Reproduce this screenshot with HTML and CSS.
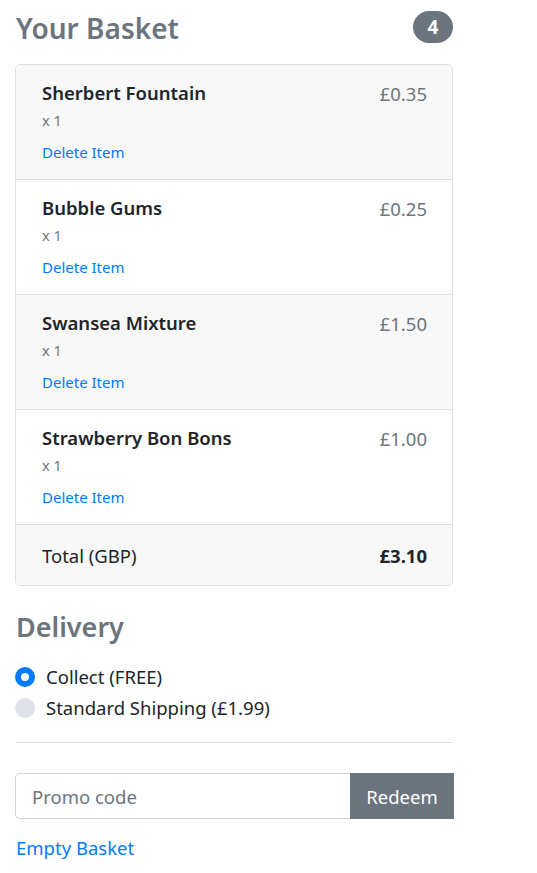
FILE: index.html
```html
<!DOCTYPE html>
<html lang="en">
<head>
<meta charset="utf-8">
<title>Your Basket</title>
<link rel="stylesheet" href="styles.css">
</head>
<body>
<div class="page">
  <div class="head">
    <h4 class="title">Your Basket</h4>
    <span class="badge">4</span>
  </div>
  <ul class="basket">
    <li class="item shade">
      <div class="info">
        <h6 class="name">Sherbert Fountain</h6>
        <small class="qty">x 1</small>
        <a class="del" href="#">Delete Item</a>
      </div>
      <span class="price">£0.35</span>
    </li>
    <li class="item">
      <div class="info">
        <h6 class="name">Bubble Gums</h6>
        <small class="qty">x 1</small>
        <a class="del" href="#">Delete Item</a>
      </div>
      <span class="price">£0.25</span>
    </li>
    <li class="item shade">
      <div class="info">
        <h6 class="name">Swansea Mixture</h6>
        <small class="qty">x 1</small>
        <a class="del" href="#">Delete Item</a>
      </div>
      <span class="price">£1.50</span>
    </li>
    <li class="item">
      <div class="info">
        <h6 class="name">Strawberry Bon Bons</h6>
        <small class="qty">x 1</small>
        <a class="del" href="#">Delete Item</a>
      </div>
      <span class="price">£1.00</span>
    </li>
    <li class="total shade">
      <span>Total (GBP)</span>
      <strong>£3.10</strong>
    </li>
  </ul>
  <h4 class="section">Delivery</h4>
  <div class="radios">
    <label class="radio"><span class="dot on"></span>Collect (FREE)</label>
    <label class="radio"><span class="dot"></span>Standard Shipping (£1.99)</label>
  </div>
  <hr class="rule">
  <form class="promo">
    <input class="promo-input" type="text" placeholder="Promo code">
    <button class="promo-btn" type="button">Redeem</button>
  </form>
  <a class="empty" href="#">Empty Basket</a>
</div>
</body>
</html>
```

FILE: styles.css
```css
* { box-sizing: border-box; }
html, body { margin: 0; padding: 0; background: #fff; }
body {
  font-family: "Noto Sans", "Open Sans", sans-serif;
  color: #212529;
  font-size: 19px;
}
.page {
  padding: 0 0 0 15px;
  width: 454px;
}
.head {
  display: flex;
  justify-content: space-between;
  align-items: center;
  height: 56px;
  padding-right: 1px;
}
.title {
  margin: 0;
  font-size: 28px;
  font-weight: 600;
  color: #6c757d;
  line-height: 1;
  padding-left: 1px;
}
.badge {
  background: #6c757d;
  color: #fff;
  font-weight: 700;
  font-size: 19px;
  border-radius: 17px;
  width: 40px;
  height: 32px;
  display: flex;
  align-items: center;
  justify-content: center;
  margin-top: -2px;
}
.basket {
  list-style: none;
  margin: 8px 0 0 0;
  padding: 0;
  width: 438px;
  border: 1px solid #dfdfdf;
  border-radius: 5px;
  overflow: hidden;
}
.item {
  display: flex;
  justify-content: space-between;
  height: 115px;
  padding: 14px 25px 0 26px;
  border-bottom: 1px solid #dfdfdf;
  background: #fff;
}
.shade { background: #f8f8f8; }
.info { display: flex; flex-direction: column; }
.name {
  margin: 0;
  font-size: 18.5px;
  font-weight: 600;
  line-height: 28px;
  color: #212529;
}
.qty {
  font-size: 14.5px;
  color: #6c757d;
  line-height: 27px;
}
.del {
  font-size: 15px;
  color: #007bff;
  text-decoration: none;
  line-height: 36px;
}
.price {
  color: #6c757d;
  font-size: 18.5px;
  line-height: 30px;
}
.total {
  display: flex;
  justify-content: space-between;
  align-items: center;
  height: 60px;
  padding: 0 25px 0 26px;
  font-size: 18.5px;
}
.total strong { font-weight: 700; }
.section {
  margin: 0;
  padding: 25px 0 0 1px;
  font-size: 27px;
  font-weight: 600;
  color: #6c757d;
  line-height: 32px;
}
.radios { margin-top: 18px; }
.radio {
  display: flex;
  align-items: center;
  height: 31px;
  font-size: 18.5px;
  color: #212529;
}
.dot {
  width: 20px;
  height: 20px;
  border-radius: 50%;
  background: #dee2e6;
  margin-right: 11px;
  flex: none;
}
.dot.on {
  border: 6px solid #007bff;
  background: #fff;
}
.rule {
  margin: 19px 0 0 1px;
  width: 437px;
  border: 0;
  border-top: 1px solid #e3e3e3;
}
.promo {
  display: flex;
  margin-top: 30px;
  width: 439px;
  height: 46px;
}
.promo-input {
  flex: 1;
  min-width: 0;
  height: 46px;
  border: 1px solid #ced4da;
  border-right: 0;
  border-radius: 5px 0 0 5px;
  padding: 0 16px;
  font-family: inherit;
  font-size: 18.5px;
  color: #495057;
  outline: none;
}
.promo-input::placeholder { color: #6c757d; }
.promo-btn {
  width: 104px;
  height: 46px;
  border: 0;
  border-radius: 0;
  background: #6c757d;
  color: #fff;
  font-family: inherit;
  font-size: 18.5px;
  padding: 0;
}
.empty {
  display: block;
  margin-top: 14px;
  padding-left: 1px;
  color: #007bff;
  text-decoration: none;
  font-size: 18.5px;
  line-height: 30px;
}
```
